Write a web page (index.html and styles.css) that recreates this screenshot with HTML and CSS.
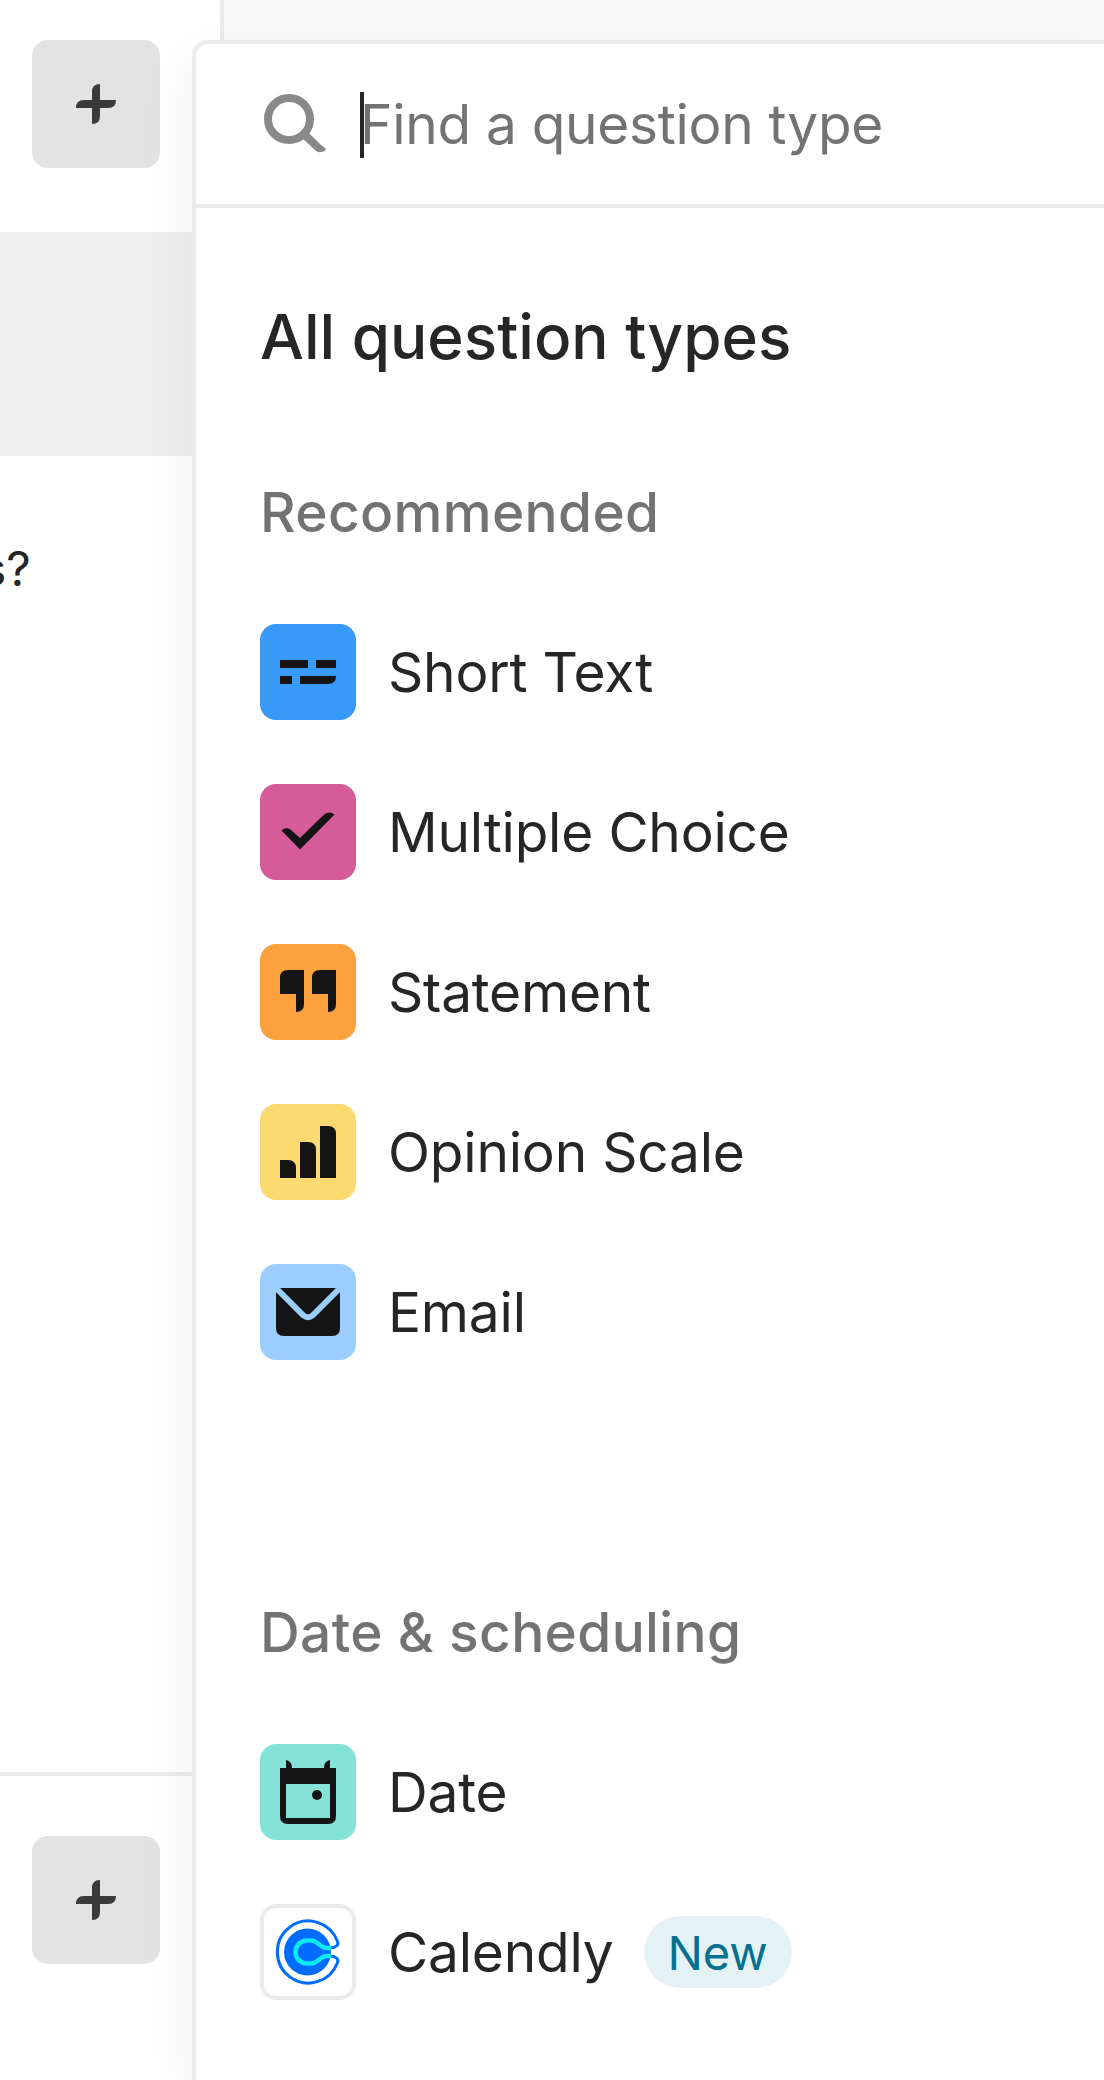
FILE: index.html
```
<!DOCTYPE html>
<html lang="en">
<head>
    <meta charset="UTF-8">
    <meta name="viewport" content="width=device-width, initial-scale=1.0">
    <title>Question types</title>
    <link rel="stylesheet" href="styles.css">
</head>
<body>
    <aside class="sidebar">
        <section class="questions">
            <button type="button" class="add-button" aria-label="Add question">
                <svg width="40" height="40" viewBox="0 0 40 40">
                    <path d="M24 0V32Q24 40 16 40V8Q16 0 24 0Z"/>
                    <path d="M0 24Q0 16 8 16H40Q40 24 32 24Z"/>
                </svg>
            </button>
            <div class="question selected"></div>
            <div class="question"><span>s?</span></div>
        </section>
        <section class="endings">
            <button type="button" class="add-button" aria-label="Add ending">
                <svg width="40" height="40" viewBox="0 0 40 40">
                    <path d="M24 0V32Q24 40 16 40V8Q16 0 24 0Z"/>
                    <path d="M0 24Q0 16 8 16H40Q40 24 32 24Z"/>
                </svg>
            </button>
        </section>
    </aside>

    <main class="popover">
        <div class="search">
            <svg class="search-icon" width="64" height="64" viewBox="0 0 64 64">
                <circle cx="29" cy="27" r="21" fill="none" stroke="#898989" stroke-width="8"/>
                <path d="M42 46L48 40L61 53Q64 55 66 57Q65 60 61 60Q58 61 55 58Z" fill="#898989"/>
            </svg>
            <div class="search-field">
                <span class="caret"></span>
                <input type="text" placeholder="Find a question type">
            </div>
        </div>

        <div class="content">
            <h1>All question types</h1>

            <h2>Recommended</h2>
            <ul>
                <li>
                    <svg class="icon blue" viewBox="0 0 96 96">
                        <path d="M20 36H48V44H20ZM56 36H76V44H56ZM20 52H32V60H20ZM40 52H76Q76 60 68 60H40Z"/>
                    </svg>
                    Short Text
                </li>
                <li>
                    <svg class="icon pink" viewBox="0 0 96 96">
                        <path d="M21.500 46.500Q26 42.500 30.500 45.500L40 54L63 31.500Q69 26 74.500 30.500L40 65.500Z"/>
                    </svg>
                    Multiple Choice
                </li>
                <li>
                    <svg class="icon orange" viewBox="0 0 96 96">
                        <path d="M28 26H44V60Q44 68 36 68V50H20V34Q20 26 28 26Z"/>
                        <path d="M60 26H76V60Q76 68 68 68V50H52V34Q52 26 60 26Z"/>
                    </svg>
                    Statement
                </li>
                <li>
                    <svg class="icon yellow" viewBox="0 0 96 96">
                        <path d="M20 56H28Q36 56 36 64V74H20ZM40 38H48Q56 38 56 46V74H40ZM60 22H68Q76 22 76 30V74H60Z"/>
                    </svg>
                    Opinion Scale
                </li>
                <li>
                    <svg class="icon light-blue" viewBox="0 0 96 96">
                        <path d="M16 24H80V64Q80 72 72 72H24Q16 72 16 64Z"/>
                        <path d="M12 20L43.500 51.500Q48 55 52.500 51.500L84 20" fill="none" stroke="#9bcdfd" stroke-width="6"/>
                    </svg>
                    Email
                </li>
            </ul>

            <h2>Date &amp; scheduling</h2>
            <ul>
                <li>
                    <svg class="icon teal" viewBox="0 0 96 96">
                        <path fill-rule="evenodd" d="M20 24H76V72Q76 80 68 80H28Q20 80 20 72ZM26 40V74H70V40Z"/>
                        <path d="M26 24V16Q32 17 32 24ZM64 24Q64 17 70 16V24Z"/>
                        <circle cx="57" cy="51" r="5"/>
                    </svg>
                    Date
                </li>
                <li>
                    <svg class="icon" viewBox="0 0 96 96">
                        <rect x="2" y="2" width="92" height="92" rx="14" fill="#fff" stroke="#ebebeb" stroke-width="4"/>
                        <circle cx="47.500" cy="48" r="23.500" fill="#006bff"/>
                        <path d="M71 44Q75 43.500 77 41.500Q78.500 40 77.500 37.500A31 31 0 1 0 77.500 58.500Q78.500 56 77 54.500Q75 52.500 71 52" fill="none" stroke="#006bff" stroke-width="3"/>
                        <path d="M71 44H67C60 44 58 36.500 51 36.500H47A11.500 11.500 0 0 0 47 59.500H51C58 59.500 60 52 67 52H71" fill="none" stroke="#0ae8f0" stroke-width="4.500"/>
                    </svg>
                    Calendly
                    <span class="badge">New</span>
                </li>
            </ul>
        </div>
    </main>
</body>
</html>
```
FILE: styles.css
```
* {
    box-sizing: border-box;
}

body {
    margin: 0;
    height: 2080px;
    position: relative;
    overflow: hidden;
    background-color: #fafafa;
    font-family: Inter, sans-serif;
    color: #262627;
}

.sidebar {
    width: 224px;
    height: 2080px;
    display: flex;
    flex-direction: column;
    background-color: #fff;
    border-right: 4px solid #ebebeb;
}

.questions {
    height: 1776px;
    padding-top: 40px;
    border-bottom: 4px solid #ebebeb;
}

.endings {
    padding-top: 60px;
}

.add-button {
    display: flex;
    align-items: center;
    justify-content: center;
    width: 128px;
    height: 128px;
    margin-left: 32px;
    padding: 0;
    border: none;
    border-radius: 16px;
    background-color: #e3e3e3;
    fill: #3a3a3a;
}

.question {
    height: 224px;
    display: flex;
    align-items: center;
    font-size: 48px;
}

.question span {
    margin-left: -19px;
}

.selected {
    margin-top: 64px;
    background-color: #efefef;
}

/* question picker, opens over the sidebar and the canvas */
.popover {
    position: absolute;
    top: 40px;
    left: 192px;
    right: 0;
    bottom: 0;
    background-color: #fff;
    border: 4px solid #ebebeb;
    border-right: none;
    border-bottom: none;
    border-radius: 16px 0 0 0;
    box-shadow: 0 16px 64px rgba(0, 0, 0, 0.06);
}

.search {
    height: 164px;
    display: flex;
    align-items: center;
    padding-left: 64px;
    border-bottom: 4px solid #ebebeb;
}

.search-icon {
    overflow: visible;
    margin-right: 36px;
}

.search-field {
    position: relative;
}

.search-field input {
    display: block;
    width: 700px;
    height: 80px;
    padding: 0;
    border: none;
    outline: none;
    background: none;
    font: 400 55px Inter, sans-serif;
    letter-spacing: -0.3px;
}

.search-field input::placeholder {
    color: #737373;
}

.caret {
    position: absolute;
    left: 0;
    top: 8px;
    width: 4px;
    height: 66px;
    background-color: #262627;
}

.content {
    padding: 81px 64px 0;
}

h1 {
    margin: 0 0 79px;
    font-size: 62px;
    font-weight: 500;
    line-height: 96px;
}

h2 {
    margin: 0 0 64px;
    font-size: 55px;
    font-weight: 500;
    line-height: 96px;
    letter-spacing: 0.35px;
    color: #737373;
}

ul {
    display: flex;
    flex-direction: column;
    gap: 64px;
    margin: 0 0 224px;
    padding: 0;
    list-style: none;
}

ul:last-child {
    margin-bottom: 0;
}

li {
    display: flex;
    align-items: center;
    height: 96px;
    font-size: 55px;
    letter-spacing: -0.2px;
}

.icon {
    width: 96px;
    height: 96px;
    margin-right: 32px;
    border-radius: 16px;
    fill: #141414;
}

.blue {
    background-color: #3899f9;
}

.pink {
    background-color: #d65c99;
}

.orange {
    background-color: #fba23f;
}

.yellow {
    background-color: #fcd971;
}

.light-blue {
    background-color: #9bcdfd;
}

.teal {
    background-color: #85e2d7;
}

.badge {
    width: 148px;
    height: 72px;
    margin-left: 30px;
    border-radius: 36px;
    background-color: #e4f2f6;
    color: #04728f;
    font-size: 47px;
    line-height: 73px;
    text-align: center;
}
```
